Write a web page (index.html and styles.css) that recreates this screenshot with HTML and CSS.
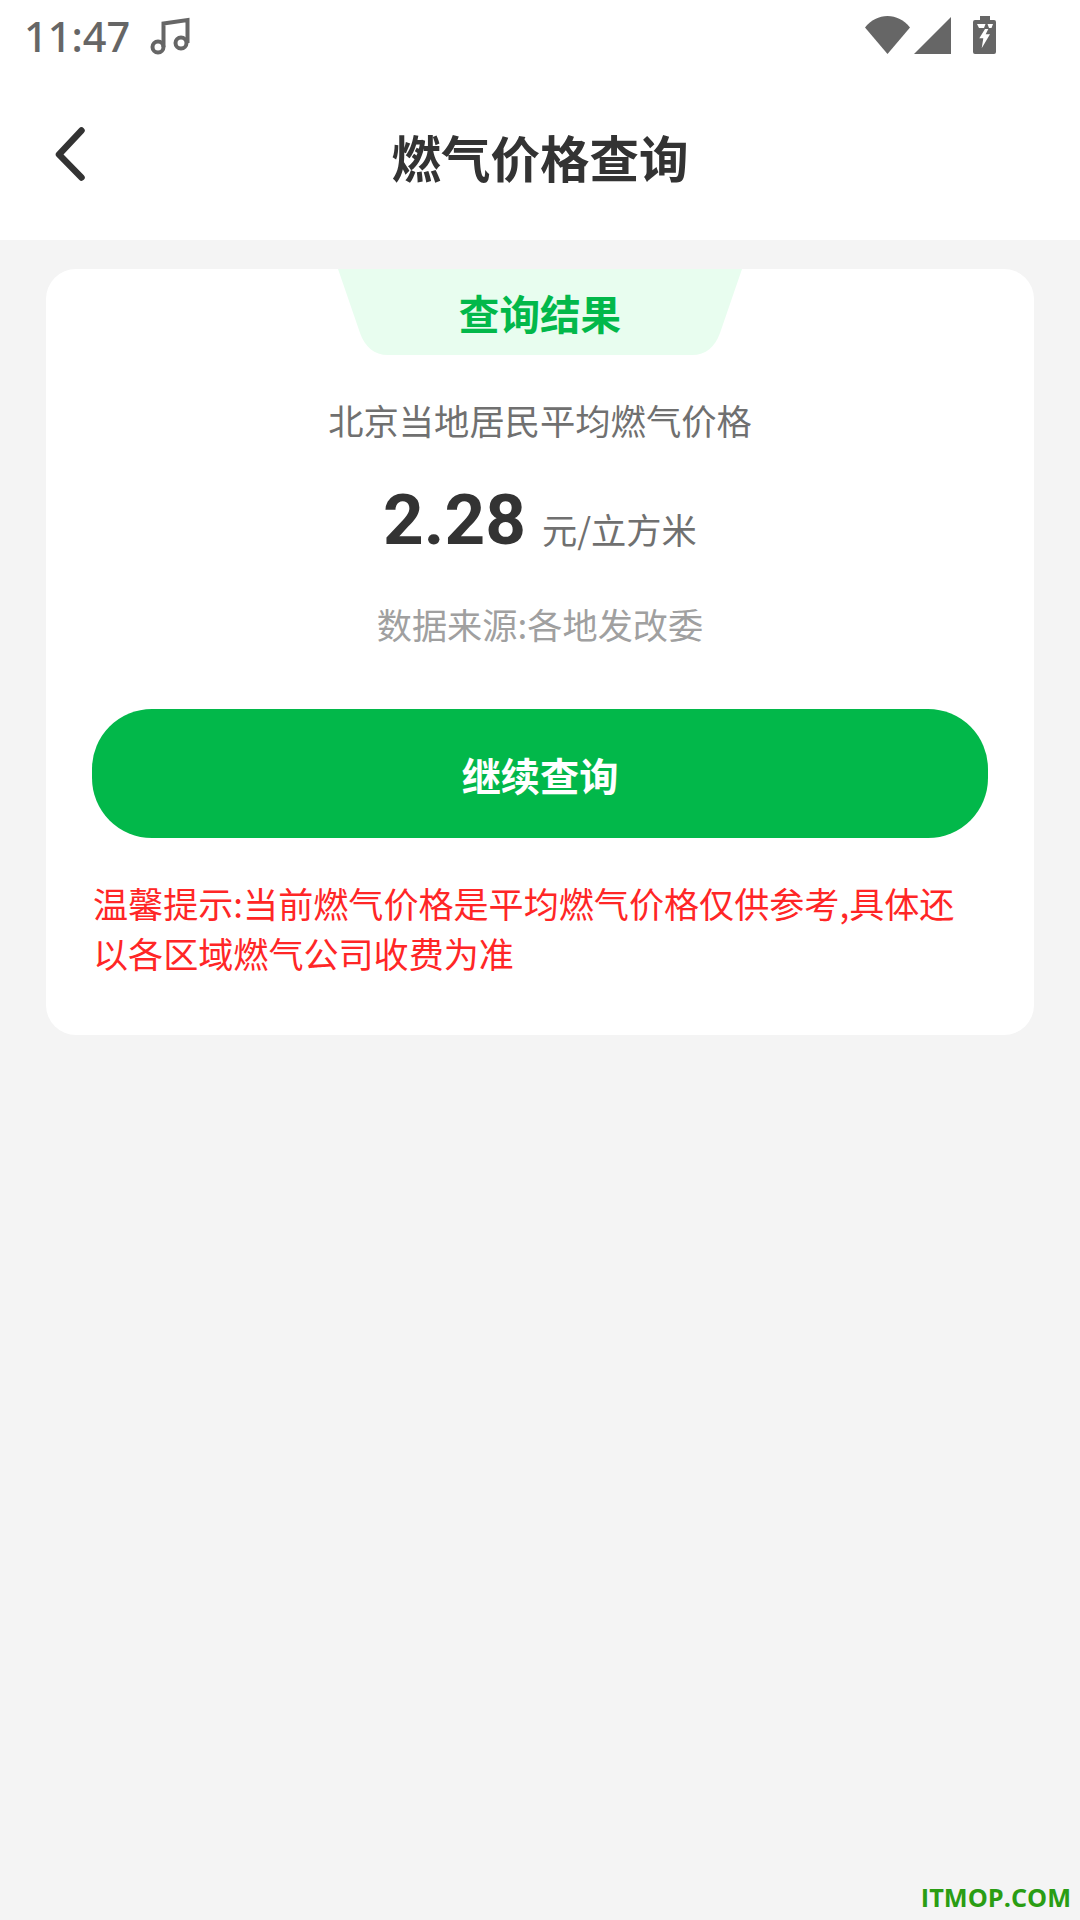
FILE: index.html
```html
<!DOCTYPE html>
<html lang="zh-CN">
<head>
  <meta charset="UTF-8">
  <title>燃气价格查询</title>
  <link rel="stylesheet" href="styles.css">
</head>
<body>
  <div class="top">
    <div class="statusbar">
      <span class="time">11:47</span>
      <svg class="music" width="42" height="42" viewBox="0 0 42 42">
        <circle cx="8" cy="33" r="5.500"/>
        <circle cx="31" cy="29" r="5.500"/>
        <path d="M13.500 33V9.500L37.500 6v23"/>
      </svg>
      <div class="status-right">
        <svg width="46" height="38" viewBox="0 0 46 38"><path d="M0 11.500C6 4 14 0 22.500 0S39 4 45 11.500L22.500 38z"/></svg>
        <svg width="38" height="38" viewBox="0 0 38 38"><path d="M0 38L37 1v37z"/></svg>
        <svg class="battery" width="24" height="38" viewBox="0 0 24 38">
          <path d="M7 0h10v4h4a2 2 0 0 1 2 2v30a2 2 0 0 1-2 2H2a2 2 0 0 1-2-2V6a2 2 0 0 1 2-2h5z"/>
          <path class="bolt" d="M4 8h8.500l-1.500 4H6zM14.500 8H20l-1.500 4H16zM12 13L6.300 22.300h4L8.700 32.300 17 18.300h-4.300L15.300 13z"/>
        </svg>
      </div>
    </div>
    <div class="titlebar">
      <svg class="back" width="34" height="58" viewBox="0 0 34 58"><path d="M27.500 4.500L5 28.500l22.500 23"/></svg>
      <h1 class="title">燃气价格查询</h1>
    </div>
  </div>

  <div class="card">
    <div class="tab">
      <svg class="tab-bg" width="404" height="86" viewBox="0 0 404 86"><path d="M0 0h404l-22 64c-5 14-14 22-28 22H50c-14 0-23-8-28-22z"/></svg>
      <span class="tab-text">查询结果</span>
    </div>
    <p class="city">北京当地居民平均燃气价格</p>
    <p class="price"><span class="num">2.28</span><span class="unit">元/立方米</span></p>
    <p class="source">数据来源:各地发改委</p>
    <div class="btn">继续查询</div>
    <p class="tip">温馨提示:当前燃气价格是平均燃气价格仅供参考,具体还以各区域燃气公司收费为准</p>
  </div>

  <div class="watermark">ITMOP.COM</div>
</body>
</html>
```

FILE: styles.css
```css
html, body {
  margin: 0;
  padding: 0;
}
body {
  width: 1080px;
  height: 1920px;
  background: #f4f4f4;
  font-family: "Noto Sans CJK SC", "Noto Sans", sans-serif;
  position: relative;
  overflow: hidden;
}
.top {
  background: #fff;
  height: 240px;
}
.statusbar {
  height: 72px;
  display: flex;
  align-items: center;
  padding-left: 24px;
  padding-right: 83px;
}
.time {
  font-family: "Noto Sans", sans-serif;
  font-size: 41.500px;
  font-weight: 500;
  color: #666;
  line-height: 72px;
}
.music {
  margin-left: 20px;
  margin-bottom: 2px;
}
.music circle, .music path {
  fill: none;
  stroke: #666;
  stroke-width: 4;
}
.status-right {
  margin-left: auto;
  margin-bottom: 2px;
  display: flex;
  align-items: center;
  gap: 3px;
}
.status-right svg {
  fill: #666;
}
.battery {
  margin-left: 18px;
}
.status-right .bolt {
  fill: #fff;
}
.titlebar {
  height: 168px;
  position: relative;
  display: flex;
  align-items: center;
  justify-content: center;
}
.back {
  position: absolute;
  left: 54px;
  top: 54px;
  fill: none;
  stroke: #333;
  stroke-width: 6.500;
  stroke-linecap: round;
  stroke-linejoin: round;
}
.title {
  margin: 0;
  font-size: 49.500px;
  font-weight: 700;
  color: #333;
}
.card {
  margin: 29px 46px 0;
  height: 766px;
  box-sizing: border-box;
  background: #fff;
  border-radius: 30px;
  padding: 0 46px;
  display: flex;
  flex-direction: column;
}
.tab {
  align-self: center;
  width: 404px;
  height: 86px;
  position: relative;
  display: flex;
  align-items: center;
  justify-content: center;
  flex: none;
}
.tab-bg {
  position: absolute;
  left: 0;
  top: 0;
  fill: #e8fdef;
}
.tab-text {
  position: relative;
  font-size: 40.600px;
  font-weight: 700;
  color: #02b84a;
}
.city {
  margin: 40px 0 0;
  text-align: center;
  font-size: 35.300px;
  line-height: 50px;
  color: #707070;
}
.price {
  margin: 30px 0 0;
  display: flex;
  justify-content: center;
  align-items: baseline;
  gap: 16px;
  line-height: 90px;
}
.num {
  font-family: Roboto, sans-serif;
  font-size: 71px;
  font-weight: 700;
  color: #333;
}
.unit {
  font-size: 35.300px;
  color: #707070;
}
.source {
  margin: 25px 0 0;
  text-align: center;
  font-size: 35.200px;
  line-height: 50px;
  color: #a0a0a0;
}
.btn {
  margin-top: 60px;
  height: 129px;
  border-radius: 60px;
  background: #02b84a;
  color: #fff;
  font-size: 39.200px;
  font-weight: 700;
  display: flex;
  align-items: center;
  justify-content: center;
  flex: none;
}
.tip {
  margin: 40px 0 0;
  padding: 0 28px 0 1px;
  font-size: 35.100px;
  line-height: 50px;
  color: #ff2626;
}
.watermark {
  position: absolute;
  right: 9px;
  bottom: 8px;
  font-family: "Open Sans", sans-serif;
  font-size: 25.300px;
  font-weight: 700;
  line-height: 30px;
  color: #2a9d13;
}
```
